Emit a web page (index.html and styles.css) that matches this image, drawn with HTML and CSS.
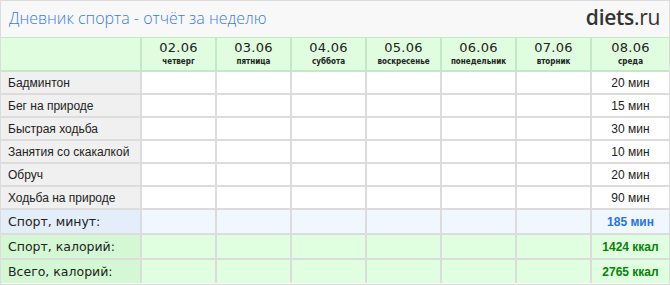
FILE: index.html
```html
<!DOCTYPE html>
<html lang="ru">
<head>
<meta charset="utf-8">
<link rel="stylesheet" href="styles.css">
</head>
<body>
<div class="diary">
  <div class="head">
    <div class="title">Дневник спорта - отчёт за неделю</div>
    <div class="logo"><b>diets</b>.ru</div>
  </div>
  <table class="grid">
    <colgroup>
      <col class="c-name"><col class="c-day"><col class="c-day"><col class="c-day"><col class="c-day"><col class="c-day"><col class="c-day"><col class="c-last">
    </colgroup>
    <tr class="days">
      <th></th>
      <th><span class="d">02.06</span><span class="w">четверг</span></th>
      <th><span class="d">03.06</span><span class="w">пятница</span></th>
      <th><span class="d">04.06</span><span class="w">суббота</span></th>
      <th><span class="d">05.06</span><span class="w">воскресенье</span></th>
      <th><span class="d">06.06</span><span class="w">понедельник</span></th>
      <th><span class="d">07.06</span><span class="w">вторник</span></th>
      <th><span class="d">08.06</span><span class="w">среда</span></th>
    </tr>
    <tr class="act"><td>Бадминтон</td><td></td><td></td><td></td><td></td><td></td><td></td><td>20 мин</td></tr>
    <tr class="act"><td>Бег на природе</td><td></td><td></td><td></td><td></td><td></td><td></td><td>15 мин</td></tr>
    <tr class="act"><td>Быстрая ходьба</td><td></td><td></td><td></td><td></td><td></td><td></td><td>30 мин</td></tr>
    <tr class="act"><td>Занятия со скакалкой</td><td></td><td></td><td></td><td></td><td></td><td></td><td>10 мин</td></tr>
    <tr class="act"><td>Обруч</td><td></td><td></td><td></td><td></td><td></td><td></td><td>20 мин</td></tr>
    <tr class="act"><td>Ходьба на природе</td><td></td><td></td><td></td><td></td><td></td><td></td><td>90 мин</td></tr>
    <tr class="sum min"><td>Спорт, минут:</td><td></td><td></td><td></td><td></td><td></td><td></td><td>185 мин</td></tr>
    <tr class="sum kcal"><td>Спорт, калорий:</td><td></td><td></td><td></td><td></td><td></td><td></td><td>1424 ккал</td></tr>
    <tr class="sum kcal"><td>Всего, калорий:</td><td></td><td></td><td></td><td></td><td></td><td></td><td>2765 ккал</td></tr>
  </table>
</div>
</body>
</html>
```
FILE: styles.css
```css
html, body { margin: 0; padding: 0; background: #fff; }
.diary {
  width: 670px;
  height: 285px;
  box-sizing: border-box;
  border: 1px solid #dcdcdc;
  background: #f8f8f8;
  overflow: hidden;
}
.head {
  height: 36px;
  display: flex;
  align-items: center;
  justify-content: space-between;
  padding: 0 9px 0 8px;
}
.title {
  font-family: "Open Sans", sans-serif;
  font-weight: 300;
  font-size: 16px;
  color: #3b7ddd;
  padding-bottom: 2px;
}
.logo {
  font-family: "Open Sans", sans-serif;
  font-size: 21px;
  color: #333;
  letter-spacing: -0.3px;
  padding-bottom: 4px;
}
.logo b { font-weight: 600; }
.grid {
  width: 668px;
  border-collapse: separate;
  border-spacing: 0;
  table-layout: fixed;
}
.c-name { width: 139px; }
.c-day { width: 75px; }
.c-last { width: 79px; }
.grid th, .grid td {
  padding: 0;
  border-left: 2px solid #dcdcdc;
  border-bottom: 2px solid #dcdcdc;
  background: #fff;
}
.grid th:first-child, .grid td:first-child { border-left: 0; }
.days th {
  height: 32px;
  background: #e0fde0;
  border-top: 1px solid #c4e8c4;
  border-left-color: #c4e8c4;
  border-bottom-color: #c4e8c4;
  text-align: center;
  vertical-align: middle;
  font-weight: normal;
  font-family: "DejaVu Sans", sans-serif;
  color: #222;
}
.days .d { display: block; font-size: 13px; line-height: 16px; letter-spacing: 0.3px; }
.days .w { display: block; font-family: "DejaVu Sans Condensed", "DejaVu Sans", sans-serif; font-size: 8px; line-height: 12px; font-weight: bold; color: #222; }
.act td {
  height: 21px;
  font-family: "Liberation Sans", sans-serif;
  font-size: 12px;
  color: #222;
  text-align: center;
}
.act td:first-child {
  background: #f0f0f0;
  text-align: left;
  padding-left: 7px;
}
.sum td {
  height: 23px;
  font-family: "Liberation Sans", sans-serif;
  font-size: 12px;
  font-weight: bold;
  text-align: center;
}
.sum td:first-child {
  font-family: "DejaVu Sans", sans-serif;
  font-size: 12.5px;
  font-weight: normal;
  text-align: left;
  padding-left: 7px;
  color: #222;
}
.min td { background: #f0f7ff; color: #2a74db; }
.min td:first-child { background: #e4eefa; }
.kcal td { background: #e0ffe0; color: #0a7f0a; }
.kcal td:first-child { background: #d4f8d4; }
.grid tr:last-child td { border-bottom: 0; }
```
